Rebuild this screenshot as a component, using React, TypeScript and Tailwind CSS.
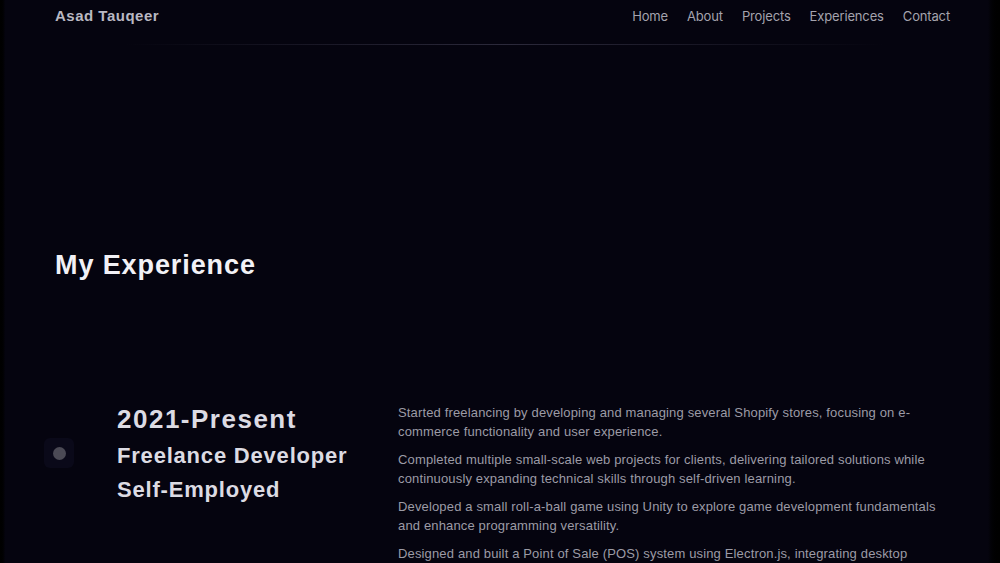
import { ReactNode } from "react"

const links = ["Home", "About", "Projects", "Experiences", "Contact"]

const points = [
  "Started freelancing by developing and managing several Shopify stores, focusing on e-commerce functionality and user experience.",
  "Completed multiple small-scale web projects for clients, delivering tailored solutions while continuously expanding technical skills through self-driven learning.",
  "Developed a small roll-a-ball game using Unity to explore game development fundamentals and enhance programming versatility.",
  "Designed and built a Point of Sale (POS) system using Electron.js, integrating desktop functionality with modern web technologies.",
]

function Shell({ children }: { children: ReactNode }) {
  return (
    <div className="h-[563px] w-full overflow-hidden bg-black flex">
      <div className="w-[5px] bg-gradient-to-r from-black to-[#05040e]" />
      <div className="flex-1 bg-[#05040f]">{children}</div>
      <div className="w-[12px] bg-gradient-to-r from-[#05040f] to-black" />
    </div>
  )
}

export default function App() {
  return (
    <Shell>
      <div className="font-['Liberation_Sans','Inter',sans-serif]">
        {/* Navbar */}
        <header className="pl-[50px] pr-[38px] pt-[6px] flex items-center justify-between h-[21px] box-content">
          <span className="text-[15px] font-bold tracking-[0.5px] text-[#b9b8c2]">Asad Tauqeer</span>
          <nav className="flex gap-[19px] font-['Inter',sans-serif]">
            {links.map((l) => (
              <a key={l} className="text-[13px] tracking-[-0.15px] text-[#a4a3ad]">
                {l}
              </a>
            ))}
          </nav>
        </header>
        <div className="mt-[17px] ml-[120px] w-[760px] h-px bg-gradient-to-r from-transparent via-[#2c2a3b] to-transparent" />

        {/* Section heading */}
        <h2 className="mt-[204px] pl-[50px] text-[27px] font-bold tracking-[0.9px] text-[#f2f1f6] leading-[32px]">
          My Experience
        </h2>

        {/* Timeline entry */}
        <div className="mt-[122px] flex">
          <div className="w-[112px] pl-[39px] pt-[35px]">
            <div className="w-[30px] h-[30px] rounded-md bg-[#0a0919] flex items-center justify-center">
              <div className="w-[13px] h-[13px] rounded-full bg-[#4b4a55]" />
            </div>
          </div>
          <div className="w-[281px] text-[#dcdbe3] font-bold">
            <div className="text-[26px] leading-[32px] tracking-[1.5px]">2021-Present</div>
            <div className="text-[22px] leading-[35px] mt-[3px] tracking-[0.8px]">Freelance Developer</div>
            <div className="text-[22px] leading-[34px] tracking-[0.8px]">Self-Employed</div>
          </div>
          <div className="w-[545px] flex flex-col gap-[9px]">
            {points.map((p) => (
              <p key={p} className="text-[13px] leading-[19px] tracking-[0.15px] text-[#9c9ba6]">
                {p}
              </p>
            ))}
          </div>
        </div>
      </div>
    </Shell>
  )
}
